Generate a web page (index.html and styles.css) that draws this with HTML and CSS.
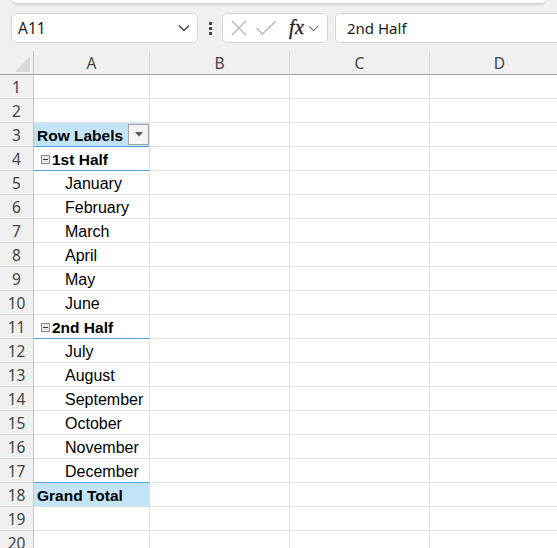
FILE: index.html
```html
<!DOCTYPE html>
<html>
<head>
<meta charset="utf-8">
<link rel="stylesheet" href="styles.css">
</head>
<body>
<div class="topbar"><div class="ribbon"></div></div>
<div class="toolbar">
  <div class="namebox">
    <span class="namebox-text">A11</span>
    <svg class="chev" width="12" height="8" viewBox="0 0 12 8"><path d="M1 1.5 L6 6.5 L11 1.5" fill="none" stroke="#333" stroke-width="1.2"/></svg>
  </div>
  <div class="dots"><i></i><i></i><i></i></div>
  <div class="fxgroup">
    <svg class="ico-x" width="18" height="18" viewBox="0 0 18 18"><path d="M2 2 L16 16 M16 2 L2 16" stroke="#b5b5b5" stroke-width="1.3" fill="none"/></svg>
    <svg class="ico-check" width="22" height="16" viewBox="0 0 22 16"><path d="M1.5 8 L7.5 14 L20.5 1.5" stroke="#b5b5b5" stroke-width="1.3" fill="none"/></svg>
    <span class="fx">fx</span>
    <svg class="chev-s" width="11" height="7" viewBox="0 0 11 7"><path d="M1 1.2 L5.5 5.7 L10 1.2" fill="none" stroke="#777" stroke-width="1.1"/></svg>
  </div>
  <div class="formula">2nd Half</div>
</div>
<div class="sheet">
  <div class="row head">
    <div class="rh corner"><span class="tri"></span></div>
    <div class="ch">A</div><div class="ch">B</div><div class="ch">C</div><div class="ch">D</div>
  </div>
  <div class="row"><div class="rh">1</div><div class="c"></div><div class="c"></div><div class="c"></div><div class="c"></div></div>
  <div class="row"><div class="rh">2</div><div class="c"></div><div class="c"></div><div class="c"></div><div class="c"></div></div>
  <div class="row"><div class="rh">3</div><div class="c pv-head blue-b"><span class="b">Row Labels</span><span class="filter"><svg width="8" height="5" viewBox="0 0 8 5"><path d="M0 0 H8 L4 4.5 Z" fill="#555"/></svg></span></div><div class="c"></div><div class="c"></div><div class="c"></div></div>
  <div class="row"><div class="rh">4</div><div class="c blue-b grp"><span class="mbox"></span><span class="b">1st Half</span></div><div class="c"></div><div class="c"></div><div class="c"></div></div>
  <div class="row"><div class="rh">5</div><div class="c item">January</div><div class="c"></div><div class="c"></div><div class="c"></div></div>
  <div class="row"><div class="rh">6</div><div class="c item">February</div><div class="c"></div><div class="c"></div><div class="c"></div></div>
  <div class="row"><div class="rh">7</div><div class="c item">March</div><div class="c"></div><div class="c"></div><div class="c"></div></div>
  <div class="row"><div class="rh">8</div><div class="c item">April</div><div class="c"></div><div class="c"></div><div class="c"></div></div>
  <div class="row"><div class="rh">9</div><div class="c item">May</div><div class="c"></div><div class="c"></div><div class="c"></div></div>
  <div class="row"><div class="rh">10</div><div class="c item">June</div><div class="c"></div><div class="c"></div><div class="c"></div></div>
  <div class="row"><div class="rh">11</div><div class="c blue-b grp"><span class="mbox"></span><span class="b">2nd Half</span></div><div class="c"></div><div class="c"></div><div class="c"></div></div>
  <div class="row"><div class="rh">12</div><div class="c item">July</div><div class="c"></div><div class="c"></div><div class="c"></div></div>
  <div class="row"><div class="rh">13</div><div class="c item">August</div><div class="c"></div><div class="c"></div><div class="c"></div></div>
  <div class="row"><div class="rh">14</div><div class="c item">September</div><div class="c"></div><div class="c"></div><div class="c"></div></div>
  <div class="row"><div class="rh">15</div><div class="c item">October</div><div class="c"></div><div class="c"></div><div class="c"></div></div>
  <div class="row"><div class="rh">16</div><div class="c item">November</div><div class="c"></div><div class="c"></div><div class="c"></div></div>
  <div class="row"><div class="rh">17</div><div class="c item blue-b">December</div><div class="c"></div><div class="c"></div><div class="c"></div></div>
  <div class="row"><div class="rh">18</div><div class="c pv-total"><span class="b">Grand Total</span></div><div class="c"></div><div class="c"></div><div class="c"></div></div>
  <div class="row"><div class="rh">19</div><div class="c"></div><div class="c"></div><div class="c"></div><div class="c"></div></div>
  <div class="row"><div class="rh">20</div><div class="c"></div><div class="c"></div><div class="c"></div><div class="c"></div></div>
</div>
</body>
</html>
```
FILE: styles.css
```css
* { box-sizing: border-box; }
html, body {
  margin: 0;
  padding: 0;
}
body {
  width: 557px;
  height: 548px;
  overflow: hidden;
  background: #f0f0f0;
  font-family: "Noto Sans", "Open Sans", sans-serif;
  color: #222;
}
.topbar {
  height: 13px;
  padding: 0 12px 0 13px;
}
.ribbon {
  height: 3px;
  background: #fff;
  border-radius: 0 0 6px 6px;
  box-shadow: 0 1px 3px rgba(0,0,0,0.22);
}
.toolbar {
  display: flex;
  align-items: center;
  height: 30px;
  padding-left: 11px;
  margin-bottom: 8px;
}
.namebox {
  width: 187px;
  height: 30px;
  background: #fff;
  border: 1px solid #d6d6d6;
  border-radius: 5px;
  display: flex;
  align-items: center;
  padding: 0 6px 0 6px;
}
.namebox-text {
  font-size: 15.5px;
  color: #1a1a1a;
  flex: 1;
}
.chev { margin-right: 1px; }
.dots {
  display: flex;
  flex-direction: column;
  gap: 2px;
  margin: 0 10px 0 11px;
}
.dots i {
  display: block;
  width: 3px;
  height: 3px;
  background: #444;
}
.fxgroup {
  width: 106px;
  height: 30px;
  background: #fff;
  border: 1px solid #d6d6d6;
  border-radius: 5px;
  display: flex;
  align-items: center;
  padding-left: 7px;
}
.ico-check { margin-left: 7px; }
.fx {
  font-family: "Liberation Serif", "DejaVu Serif", serif;
  font-style: italic;
  font-size: 20px;
  color: #222;
  margin-left: 12px;
  letter-spacing: 0.5px;
  line-height: 1;
  margin-top: -3px;
  -webkit-text-stroke: 0.3px #222;
}
.chev-s { margin-left: 4px; }
.formula {
  flex: 1;
  height: 30px;
  margin-left: 7px;
  background: #fff;
  border: 1px solid #d6d6d6;
  border-right: none;
  border-radius: 5px 0 0 5px;
  display: flex;
  align-items: center;
  padding-left: 11px;
  font-size: 15px;
  color: #1a1a1a;
}
.sheet {
  background: #fff;
}
.row {
  display: grid;
  grid-template-columns: 34px 116px 140px 140px 140px;
  height: 24px;
}
.row.head .rh, .row.head .ch {
  border-bottom: 1px solid #a3a3a3;
}
.rh {
  background: #f0f0f0;
  border-right: 1px solid #c4c4c4;
  border-bottom: 1px solid #dadada;
  display: flex;
  align-items: center;
  justify-content: center;
  font-size: 15.5px;
  color: #444;
}
.corner {
  position: relative;
}
.tri {
  position: absolute;
  right: 3px;
  bottom: 2px;
  width: 0;
  height: 0;
  border-left: 15px solid transparent;
  border-bottom: 16px solid #d9d9d9;
}
.ch {
  background: #f0f0f0;
  border-right: 1px solid #d8d8d8;
  display: flex;
  align-items: center;
  justify-content: center;
  font-size: 15.5px;
  color: #444;
}
.c {
  border-right: 1px solid #e1e1e1;
  border-bottom: 1px solid #e1e1e1;
  display: flex;
  align-items: center;
  padding-top: 2px;
  font-family: "Liberation Sans", Arial, sans-serif;
  font-size: 16px;
  color: #000;
  white-space: nowrap;
  overflow: visible;
}
.b { font-weight: bold; font-size: 15.5px; }
.blue-b { border-bottom-color: #4aa7dc; }
.pv-head {
  background: #c2e4f6;
  padding-left: 3px;
}
.pv-total {
  background: #c2e4f6;
  padding-left: 3px;
}
.filter {
  margin-left: auto;
  width: 21px;
  height: 21px;
  margin-top: -2px;
  border: 1px solid #a6a6a6;
  background: #f4f4f4;
  display: flex;
  align-items: center;
  justify-content: center;
}
.grp { padding-left: 7px; }
.mbox {
  width: 9px;
  height: 9px;
  border: 1px solid #8e8e8e;
  background: #e8e8e8;
  position: relative;
  margin-right: 2px;
  margin-top: -1px;
}
.mbox::after {
  content: "";
  position: absolute;
  left: 1px;
  right: 1px;
  top: 3px;
  height: 1px;
  background: #333;
}
.item { padding-left: 31px; }
```
